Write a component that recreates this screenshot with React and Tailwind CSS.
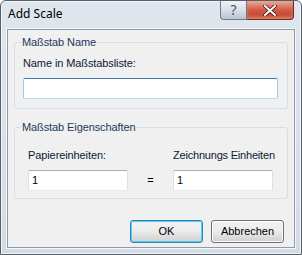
const font = { fontFamily: '"Liberation Sans", Arial, sans-serif' }
const titleFont = { fontFamily: '"Noto Sans", "Open Sans", sans-serif' }

function GroupBox({ title, className = '', children }) {
  return (
    <div className={`relative rounded-[3px] border border-[#d5dfe5] ${className}`}>
      <span className="absolute -top-[8px] left-[6px] bg-[#f0f0f0] px-[1px] text-[11px] leading-[14px] tracking-[-0.1px] text-[#1e395b]">
        {title}
      </span>
      {children}
    </div>
  )
}

function TextBox({ value = '', focused = false, className = '' }) {
  return (
    <div
      className={`h-[21px] border bg-white px-[3px] text-[11px] leading-[19px] text-black rounded-[2px] ${
        focused ? 'border-[#3d7bad] border-b-[#b7d9ed] border-x-[#a4c9e3]' : 'border-[#abadb3] border-b-[#e3e9ef] border-x-[#dbdfe6]'
      } ${className}`}
    >
      {value}
    </div>
  )
}

function Button({ children, def = false }) {
  return (
    <div
      className={`flex h-[23px] w-[73px] items-center justify-center rounded-[3px] border text-[11px] text-black bg-gradient-to-b from-[#f2f2f2] via-[#ebebeb] to-[#cfcfcf] ${
        def ? 'border-[#3c7fb1] shadow-[inset_0_0_0_1px_#48d3f7]' : 'border-[#707070] shadow-[inset_0_0_0_1px_#fcfcfc]'
      }`}
    >
      {children}
    </div>
  )
}

export default function App() {
  return (
    <div className="h-[255px] w-[302px] bg-white" style={font}>
      <div className="flex h-[255px] w-[302px] flex-col rounded-t-[6px] border border-[#595f66] bg-gradient-to-b from-[#dfe6ee] to-[#d3dbe5] shadow-[inset_0_0_0_1px_#f4f7fa]">
        <div className="flex h-[28px] items-start">
          <div className="pl-[7px] pt-[5px] text-[12px] leading-[16px] text-black" style={titleFont}>Add Scale</div>
          <div className="ml-auto mr-[7px] flex">
            <div className="flex h-[19px] w-[27px] items-center justify-center rounded-bl-[4px] border border-t-0 border-[#6f7a86] bg-gradient-to-b from-[#eef2f6] via-[#d9e0e8] to-[#b9c4d0] text-[14px] leading-none text-[#4a5663]" style={titleFont}>
              ?
            </div>
            <div className="flex h-[19px] w-[47px] items-center justify-center rounded-br-[4px] border border-l-0 border-t-0 border-[#6b2b22] bg-gradient-to-b from-[#e9a99c] via-[#cf5a44] to-[#c23e2a] shadow-[inset_0_-2px_3px_#e0846c]">
              <svg width="14" height="11" viewBox="0 0 14 11">
                <path d="M2 1 L12 10 M12 1 L2 10" stroke="#3a1a14" strokeWidth="3.6" strokeLinecap="round" />
                <path d="M2 1 L12 10 M12 1 L2 10" stroke="#ffffff" strokeWidth="2" strokeLinecap="round" />
              </svg>
            </div>
          </div>
        </div>
        <div className="mx-[6px] mb-[6px] flex flex-1 flex-col border border-[#8d9aa8] bg-[#f0f0f0] shadow-[0_0_0_1px_#f5f8fb]">
          <GroupBox title="Maßstab Name" className="mx-[6px] mt-[12px] h-[67px] px-[8px] pt-[13px]">
            <div className="text-[11px] leading-[14px] tracking-[-0.1px] text-[#0a1a33]">Name in Maßstabsliste:</div>
            <TextBox focused className="mt-[8px] mr-[1px]" />
          </GroupBox>
          <GroupBox title="Maßstab Eigenschaften" className="mx-[6px] mt-[18px] h-[72px] px-[13px] pt-[20px]">
            <div className="flex items-start">
              <div className="flex w-[100px] flex-col">
                <div className="text-[11px] leading-[14px] tracking-[-0.1px] text-[#0a1a33]">Papiereinheiten:</div>
                <TextBox value="1" className="mt-[8px]" />
              </div>
              <div className="w-[45px] pt-[25px] text-center text-[11px] leading-[14px] text-black">=</div>
              <div className="flex w-[100px] flex-col">
                <div className="whitespace-nowrap text-[11px] leading-[14px] tracking-[-0.2px] text-[#0a1a33]">Zeichnungs Einheiten</div>
                <TextBox value="1" className="mt-[8px]" />
              </div>
            </div>
          </GroupBox>
          <div className="mt-[21px] flex justify-end gap-[8px] pr-[10px]">
            <Button def>OK</Button>
            <Button>Abbrechen</Button>
          </div>
        </div>
      </div>
    </div>
  )
}
